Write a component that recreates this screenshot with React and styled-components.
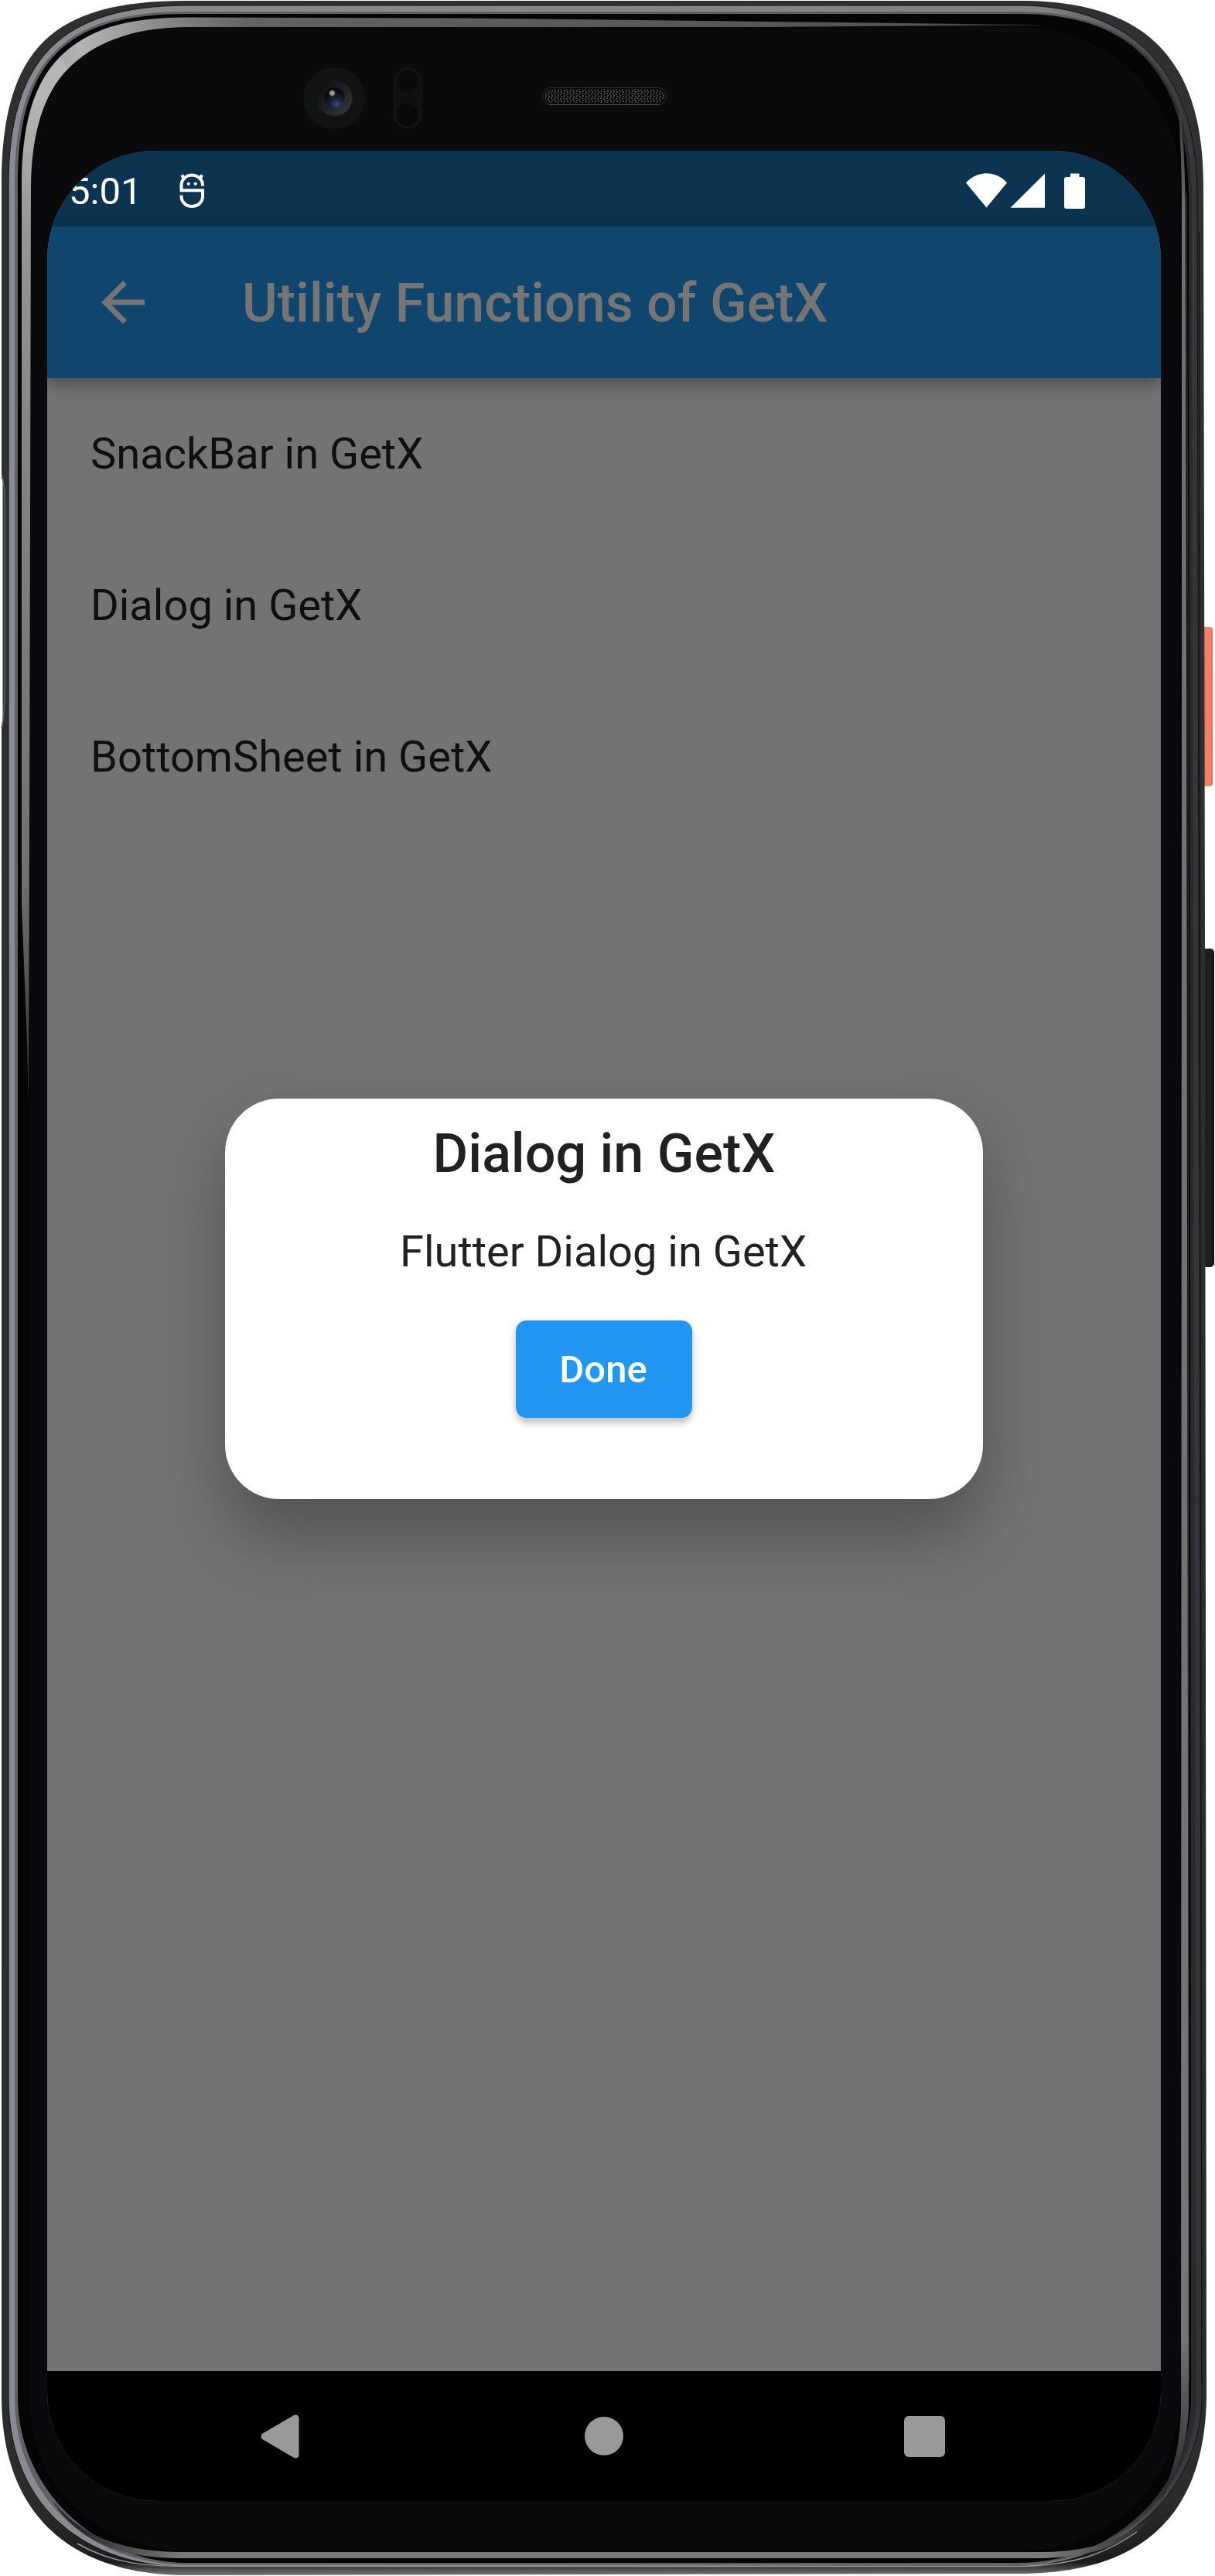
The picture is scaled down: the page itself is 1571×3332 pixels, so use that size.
import React from 'react';
import styled, { createGlobalStyle } from 'styled-components';

const GlobalStyle = createGlobalStyle`
  html, body { margin: 0; padding: 0; background: #fff; }
  *, *::before, *::after { box-sizing: border-box; }
`;

const Phone = styled.div`
  position: relative;
  width: 1571px;
  height: 3332px;
  padding: 195px 70px 97px 61px;
  overflow: hidden;
  font-family: Roboto, "Liberation Sans", sans-serif;
`;

const FrameArt = styled.svg`
  position: absolute;
  inset: 0;
  display: block;
`;

const Screen = styled.main`
  position: relative;
  display: flex;
  flex-direction: column;
  width: 1440px;
  height: 3040px;
  border-radius: 140px;
  overflow: hidden;
  background: #737373;
`;

const StatusBar = styled.div`
  flex: none;
  display: flex;
  align-items: center;
  justify-content: space-between;
  height: 98px;
  padding: 6px 98px 0 28px;
  background: #0c3350;
`;

const StatusGroup = styled.div`
  display: flex;
  align-items: center;
  gap: ${(p) => p.$gap}px;
`;

const Clock = styled.span`
  padding-top: 1px;
  font-size: 49px;
  line-height: 58px;
  color: #fff;
`;

const AppBar = styled.header`
  position: relative;
  flex: none;
  display: flex;
  align-items: center;
  gap: 112px;
  height: 196px;
  padding-left: 56px;
  background: #10456e;
  box-shadow: 0 7px 14px -3px rgba(0, 0, 0, 0.2), 0 12px 17px rgba(0, 0, 0, 0.14),
    0 3px 30px rgba(0, 0, 0, 0.06);
`;

const AppTitle = styled.h1`
  margin: 2px 0 0;
  font-size: 70px;
  line-height: 82px;
  font-weight: 500;
  color: #757575;
  white-space: nowrap;
`;

const List = styled.ul`
  flex: 1;
  margin: 0;
  padding: 0;
  list-style: none;
`;

const ListItem = styled.li`
  display: flex;
  align-items: center;
  height: 196px;
  padding: 0 56px;
  font-size: 56px;
  line-height: 66px;
  color: #0f0f0f;
`;

const NavBar = styled.nav`
  flex: none;
  display: flex;
  align-items: center;
  justify-content: space-between;
  height: 168px;
  padding: 0 279px 0 276px;
  background: #000;
`;

const DialogLayer = styled.div`
  position: absolute;
  inset: 98px 0 168px;
  display: flex;
  align-items: center;
  justify-content: center;
`;

const DialogCard = styled.section`
  display: flex;
  flex-direction: column;
  align-items: center;
  width: 980px;
  height: 518px;
  padding-top: 30px;
  border-radius: 70px;
  background: #fff;
  color: #212121;
  box-shadow: 0 62px 84px -6px rgba(0, 0, 0, 0.2), 0 22px 70px 4px rgba(0, 0, 0, 0.1);
`;

const DialogTitle = styled.h2`
  margin: 0;
  font-size: 70px;
  line-height: 82px;
  font-weight: 500;
`;

const DialogText = styled.p`
  margin: 53px 0 0;
  padding-right: 2px;
  font-size: 56px;
  line-height: 66px;
`;

const DoneButton = styled.button`
  width: 228px;
  height: 126px;
  margin-top: 56px;
  padding: 2px 2px 0 0;
  border: 0;
  border-radius: 14px;
  background: #2196f3;
  color: #fff;
  font: 500 49px/58px Roboto, "Liberation Sans", sans-serif;
  box-shadow: 0 7px 7px rgba(0, 0, 0, 0.16), 0 3px 14px rgba(0, 0, 0, 0.12);
`;

const GREY = '#999';

function PhoneFrame() {
  return (
    <FrameArt width="1571" height="3332" viewBox="0 0 1571 3332" aria-hidden="true">
      <defs>
        <linearGradient id="edge" x1="0" y1="0" x2="0" y2="1">
          <stop offset="0" stopColor="#2f302f" />
          <stop offset="0.97" stopColor="#2c2c2c" />
          <stop offset="0.995" stopColor="#1c1c1d" />
          <stop offset="1" stopColor="#777" />
        </linearGradient>
        <linearGradient id="metal" gradientUnits="userSpaceOnUse" x1="0" y1="0" x2="1571" y2="0">
          <stop offset="0" stopColor="#898b90" />
          <stop offset="0.86" stopColor="#808287" />
          <stop offset="0.95" stopColor="#44464a" />
          <stop offset="1" stopColor="#2b2d30" />
        </linearGradient>
        <linearGradient id="metalInner" gradientUnits="userSpaceOnUse" x1="0" y1="0" x2="1571" y2="0">
          <stop offset="0" stopColor="#606267" />
          <stop offset="0.88" stopColor="#5a5c61" />
          <stop offset="0.96" stopColor="#2c2d30" />
          <stop offset="1" stopColor="#242629" />
        </linearGradient>
        <linearGradient id="shineTop" gradientUnits="userSpaceOnUse" x1="28" y1="0" x2="1350" y2="0">
          <stop offset="0" stopColor="#999" />
          <stop offset="0.06" stopColor="#b4b4b4" />
          <stop offset="0.13" stopColor="#8c8c8c" />
          <stop offset="0.22" stopColor="#636363" />
          <stop offset="0.6" stopColor="#585858" />
          <stop offset="0.88" stopColor="#555" />
          <stop offset="1" stopColor="#1c1c1c" />
        </linearGradient>
        <linearGradient id="shineLeft" gradientUnits="userSpaceOnUse" x1="0" y1="130" x2="0" y2="1480">
          <stop offset="0" stopColor="#b5b5b5" />
          <stop offset="0.12" stopColor="#969696" />
          <stop offset="0.3" stopColor="#868686" />
          <stop offset="0.75" stopColor="#707070" />
          <stop offset="1" stopColor="#202020" />
        </linearGradient>
        <linearGradient id="shineRight" gradientUnits="userSpaceOnUse" x1="0" y1="120" x2="0" y2="3240">
          <stop offset="0" stopColor="#333" />
          <stop offset="0.05" stopColor="#707070" />
          <stop offset="0.93" stopColor="#757575" />
          <stop offset="1" stopColor="#222" />
        </linearGradient>
        <linearGradient id="shineBottom" gradientUnits="userSpaceOnUse" x1="68" y1="0" x2="1497" y2="0">
          <stop offset="0" stopColor="#181818" />
          <stop offset="0.12" stopColor="#7a7a7a" />
          <stop offset="0.9" stopColor="#7a7a7a" />
          <stop offset="1" stopColor="#222" />
        </linearGradient>
        <linearGradient id="power" x1="0" y1="0" x2="1" y2="0">
          <stop offset="0" stopColor="#d5604c" />
          <stop offset="0.35" stopColor="#f38069" />
          <stop offset="0.8" stopColor="#ee8067" />
          <stop offset="1" stopColor="#f2604a" />
        </linearGradient>
        <linearGradient id="lensRing" x1="0" y1="0" x2="1" y2="1">
          <stop offset="0" stopColor="#08080a" />
          <stop offset="1" stopColor="#3a3a3c" />
        </linearGradient>
        <radialGradient id="lens" cx="0.6" cy="0.85" r="0.65">
          <stop offset="0" stopColor="#3f5080" />
          <stop offset="0.4" stopColor="#20253f" />
          <stop offset="1" stopColor="#08070c" />
        </radialGradient>
        <radialGradient id="glint">
          <stop offset="0" stopColor="#b5b5b8" />
          <stop offset="0.5" stopColor="#88888a" />
          <stop offset="1" stopColor="#15141a" stopOpacity="0" />
        </radialGradient>
        <pattern id="mesh" width="8" height="6" patternUnits="userSpaceOnUse">
          <rect width="8" height="6" fill="#0c0c0c" />
          <path d="M0 1h2M4 2h2M1 4h2M5 5h2" stroke="#5c5c5c" strokeWidth="1.4" />
        </pattern>
      </defs>

      <rect x="1554" y="811" width="14" height="206" rx="4" fill="url(#power)" />
      <rect x="1554" y="1227" width="16" height="412" rx="5" fill="#1e1e1e" />
      <path d="M1568.5 1234V1632" stroke="#0a0a0a" strokeWidth="1.5" />

      <path
        fill="url(#edge)"
        d="M2 240C2 60 70 1 240 1H1320C1480 1 1556 75 1556 240L1558 1200L1560 3100C1558 3260 1470 3329 1317 3329L240 3331C110 3331 2 3268 2 3100Z"
      />
      <path
        fill="url(#metal)"
        stroke="#111"
        strokeWidth="1"
        d="M11 240C11 75 80 8 240 7H1320C1460 8 1548 90 1548 250L1551 1600L1554 3100C1554 3220 1450 3319 1317 3319L240 3320C120 3320 11 3250 11 3100Z"
      />
      <path
        fill="url(#metalInner)"
        d="M19 240C19 81 80 15 240 15H1320C1464 15 1541 94 1541 256L1547 3100C1547 3220 1445 3317 1317 3317.5H240C122 3317 19 3235 19 3100Z"
      />
      <path
        fill="#050506"
        d="M23 240C23 84 80 18 240 18H1320C1465 18 1537 95 1537 260L1539 1600L1540 3100C1540 3220 1440 3315 1317 3315H240C125 3314 23 3220 23 3100Z"
      />
      <path d="M1550.5 300L1554 3080" stroke="#141414" strokeWidth="1.2" fill="none" />
      <path d="M1534 250L1536 800L1537 3080" stroke="#343434" strokeWidth="1.2" fill="none" />

      <path
        fill="#0a0a0c"
        d="M40 240C42 110 100 36 240 35H1320C1430 36 1526 120 1526 240V3100C1526 3215 1430 3300 1317 3300H240C130 3298 38 3220 38 3100Z"
      />

      <path
        fill="url(#shineTop)"
        d="M76 75C115 36 165 23 240 22.5L600 23.5L1170 30L1345 32V33L1170 33.5L1000 35H240C170 36 122 55 88 89Z"
      />
      <path
        fill="url(#shineLeft)"
        d="M28 240C28 165 42 110 76.5 74.5L88.5 88.5C55 122 41 175 40 240L38 1100L37 1430L35 1350L28 1170Z"
      />
      <path
        fill="url(#shineRight)"
        d="M1524 130C1530 170 1532 210 1532.5 260L1534 800L1537 3110C1537 3160 1520 3205 1500 3235C1515 3200 1527 3165 1527 3110L1528 800V260C1528 210 1525 165 1524 130Z"
      />
      <path
        fill="url(#shineBottom)"
        d="M68 3235C100 3275 150 3300 230 3301H1350C1410 3300 1460 3285 1497 3245C1470 3290 1410 3309 1340 3309H230C150 3308 100 3285 68 3235Z"
      />
      <path
        d="M100 3290C140 3313 180 3319.5 240 3319.5H1317C1390 3318 1430 3303 1470 3275"
        stroke="#95979b"
        strokeWidth="1.5"
        fill="none"
      />
      <path d="M0 613L3.5 622V930L1.5 943H0Z" fill="#fff" />
      <path d="M2.5 615Q6 625 6 650V890Q6 925 2 942" stroke="#59625d" strokeWidth="1.5" fill="none" />

      <circle cx="432" cy="127" r="40" fill="#111213" />
      <circle cx="432.5" cy="127" r="23" fill="url(#lensRing)" />
      <circle cx="432.5" cy="126" r="13" fill="url(#lens)" />
      <circle cx="429.5" cy="120.5" r="5.5" fill="url(#glint)" />

      <rect x="510.5" y="88.5" width="34" height="77" rx="17" fill="#101012" stroke="#141416" strokeWidth="2" />
      <circle cx="527" cy="105" r="14" fill="#0a0a0c" />
      <circle cx="527" cy="148.5" r="14" fill="#09090b" />

      <rect x="701.5" y="113.5" width="160" height="22" rx="11" fill="#0a0a0a" stroke="#2b2b2b" />
      <rect x="704" y="115.5" width="155" height="17.5" rx="8.7" fill="url(#mesh)" />
      <path d="M710 135.5H853" stroke="#5a5c5c" strokeWidth="1.2" />
    </FrameArt>
  );
}

const DebugIcon = () => (
  <svg width="33" height="46" viewBox="0 0 33 46" fill="none" stroke="#fff" strokeWidth="4">
    <path d="M30 16.5V15.5A13.75 13 0 0 0 2.5 15.5V22.3H30V30A13.75 13 0 0 1 2.5 30V28.5" />
    <path d="M3 2.5L6.5 7M29.5 2.5L26 7" />
    <circle cx="11.8" cy="13.8" r="2.1" fill="#fff" stroke="none" />
    <circle cx="20.7" cy="13.8" r="2.1" fill="#fff" stroke="none" />
  </svg>
);

const SignalIcons = () => (
  <svg width="154" height="46" viewBox="0 0 154 46" fill="#fff">
    <path d="M0 12.5C14 -3.7 39 -3.7 53 12.5L26.5 44.5Z" />
    <path d="M57.5 44.7L102 0.5V44.7Z" />
    <path d="M135 0.5H146.5V5H151Q154 5 154 8V43Q154 46 151 46H130Q127 46 127 43V8Q127 5 130 5H135Z" />
  </svg>
);

const BackArrow = () => (
  <svg width="84" height="84" viewBox="0 0 24 24" fill="#757575">
    <path d="M20 11H7.83l5.59-5.59L12 4l-8 8 8 8 1.41-1.41L7.83 13H20v-2z" />
  </svg>
);

const NavBack = () => (
  <svg width="55" height="57" viewBox="0 0 55 57" fill={GREY}>
    <path d="M2 25L43 1Q49 -1 49.5 5V52Q49 58 43 56L2 32Q-1 28.5 2 25Z" />
  </svg>
);

const NavHome = () => (
  <svg width="50" height="50" viewBox="0 0 50 50" fill={GREY}>
    <circle cx="25" cy="25" r="25" />
  </svg>
);

const NavRecent = () => (
  <svg width="53" height="53" viewBox="0 0 53 53" fill={GREY}>
    <rect width="53" height="53" rx="6" />
  </svg>
);

const actions = ['SnackBar in GetX', 'Dialog in GetX', 'BottomSheet in GetX'];

export default function App() {
  return (
    <>
      <GlobalStyle />
      <Phone>
        <PhoneFrame />
        <Screen>
          <StatusBar>
            <StatusGroup $gap={49}>
              <Clock>5:01</Clock>
              <DebugIcon />
            </StatusGroup>
            <SignalIcons />
          </StatusBar>
          <AppBar>
            <BackArrow />
            <AppTitle>Utility Functions of GetX</AppTitle>
          </AppBar>
          <List>
            {actions.map((label) => (
              <ListItem key={label}>{label}</ListItem>
            ))}
          </List>
          <NavBar>
            <NavBack />
            <NavHome />
            <NavRecent />
          </NavBar>
          <DialogLayer>
            <DialogCard>
              <DialogTitle>Dialog in GetX</DialogTitle>
              <DialogText>Flutter Dialog in GetX</DialogText>
              <DoneButton>Done</DoneButton>
            </DialogCard>
          </DialogLayer>
        </Screen>
      </Phone>
    </>
  );
}
